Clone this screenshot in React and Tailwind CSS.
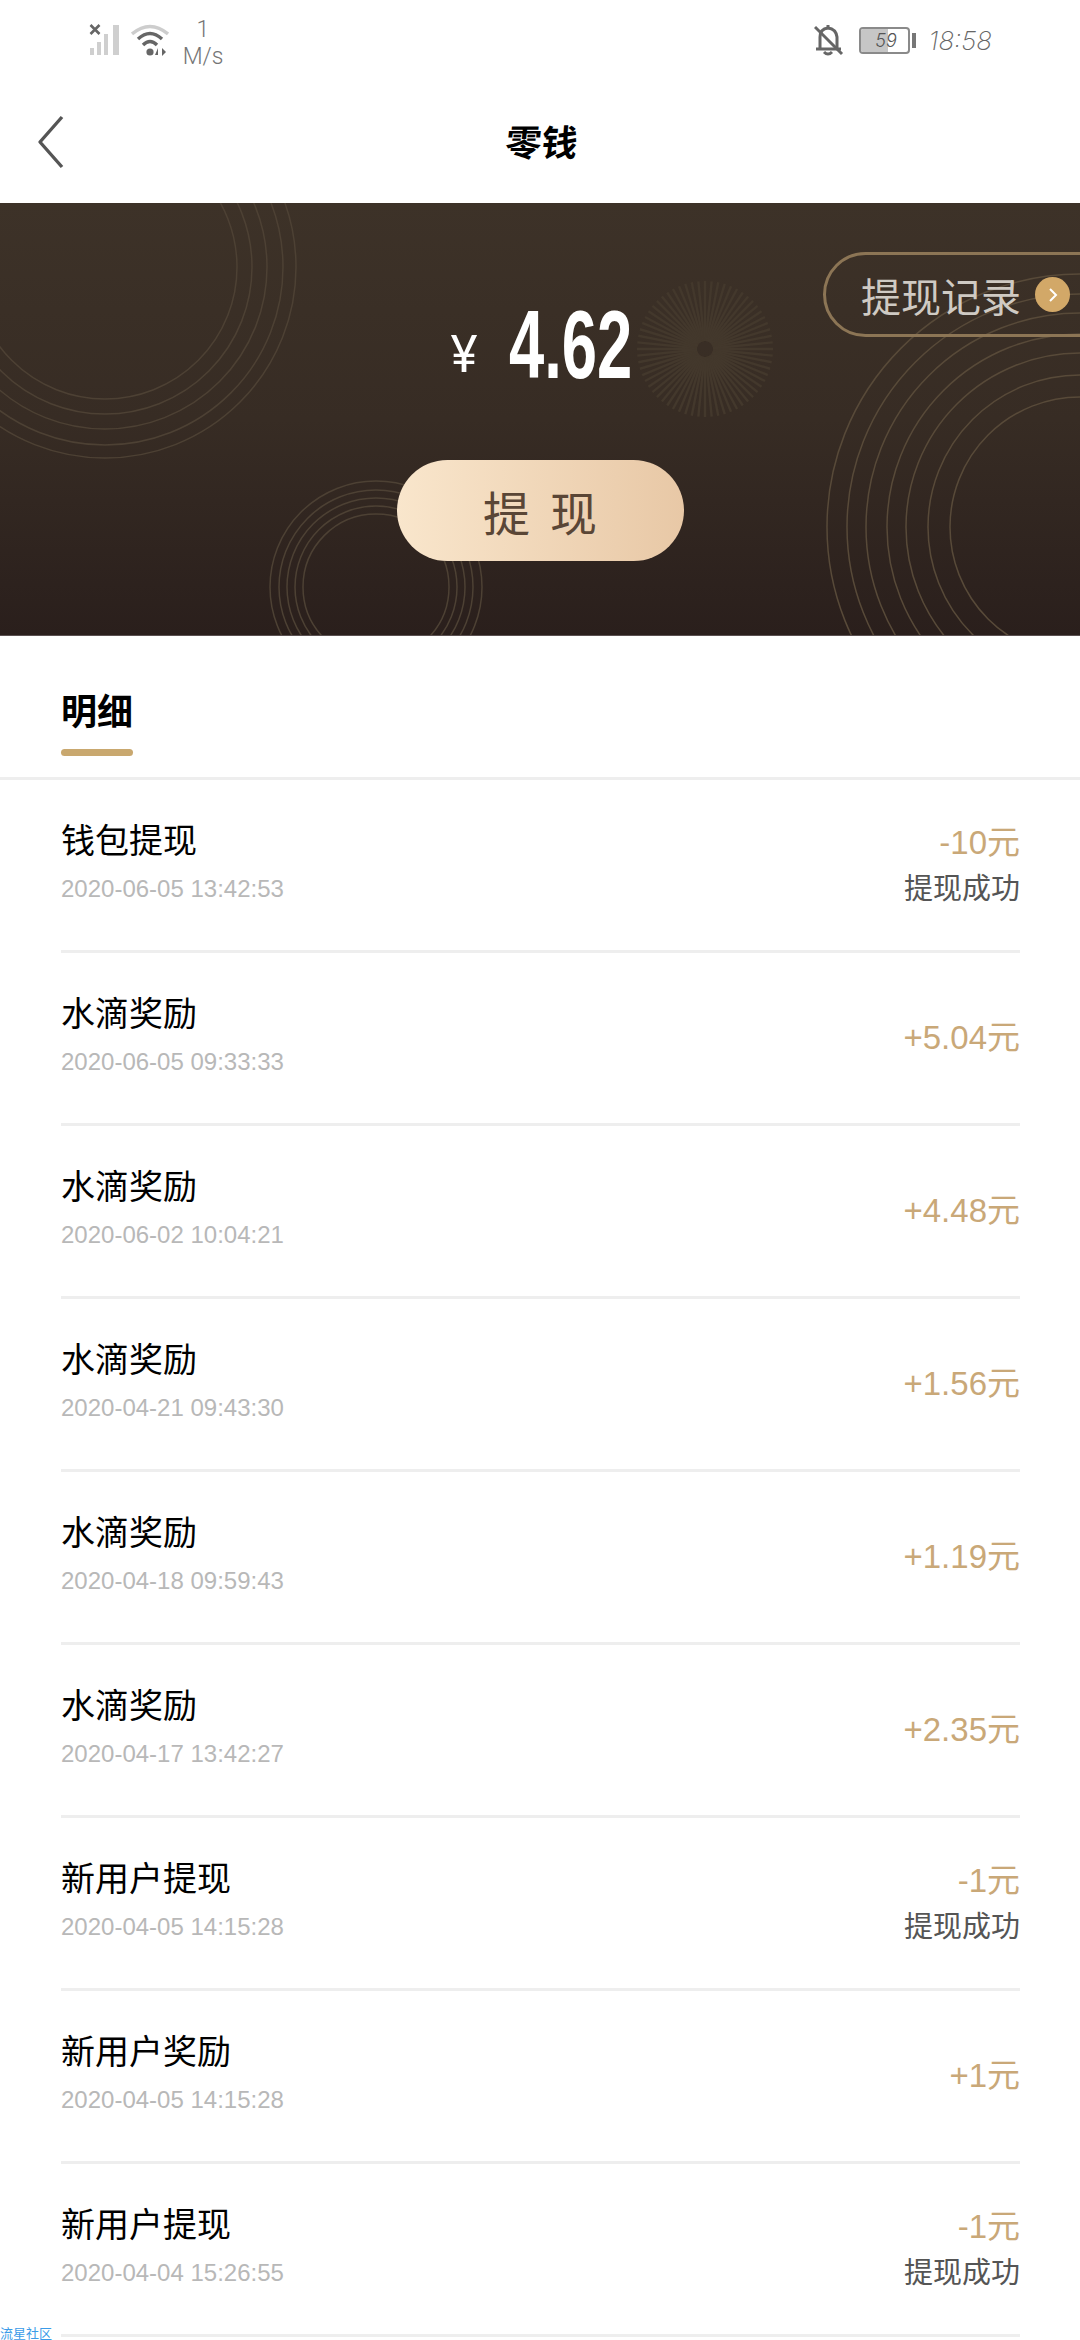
const rows = [
  { title: '钱包提现', date: '2020-06-05 13:42:53', amount: '-10元', sub: '提现成功' },
  { title: '水滴奖励', date: '2020-06-05 09:33:33', amount: '+5.04元' },
  { title: '水滴奖励', date: '2020-06-02 10:04:21', amount: '+4.48元' },
  { title: '水滴奖励', date: '2020-04-21 09:43:30', amount: '+1.56元' },
  { title: '水滴奖励', date: '2020-04-18 09:59:43', amount: '+1.19元' },
  { title: '水滴奖励', date: '2020-04-17 13:42:27', amount: '+2.35元' },
  { title: '新用户提现', date: '2020-04-05 14:15:28', amount: '-1元', sub: '提现成功' },
  { title: '新用户奖励', date: '2020-04-05 14:15:28', amount: '+1元' },
  { title: '新用户提现', date: '2020-04-04 15:26:55', amount: '-1元', sub: '提现成功' },
];

const FONT = 'font-["Liberation_Sans","Noto_Sans_CJK_SC",sans-serif]';

function Decor() {
  const spokes = Array.from({ length: 64 }, (_, i) => (i * Math.PI * 2) / 64);
  return (
    <svg className="absolute left-0 top-0" width="1080" height="433" viewBox="0 203 1080 433" fill="none">
      <g stroke="#4d4134" strokeWidth="1.5">
        {[191, 178, 162, 147, 132].map((r) => (
          <circle key={r} cx="105" cy="267" r={r} />
        ))}
        {[106, 97, 89, 81, 73].map((r) => (
          <circle key={r} cx="376" cy="587" r={r} />
        ))}
      </g>
      <g stroke="#584a39" strokeWidth="1.5">
        {[253, 233, 214, 193, 174, 152, 130].map((r) => (
          <circle key={r} cx="1080" cy="527" r={r} />
        ))}
      </g>
      <g stroke="#43382c" strokeWidth="2.4">
        {spokes.map((a, i) => (
          <line
            key={i}
            x1={705 + 8 * Math.cos(a)}
            y1={349 + 8 * Math.sin(a)}
            x2={705 + 68 * Math.cos(a)}
            y2={349 + 68 * Math.sin(a)}
          />
        ))}
      </g>
    </svg>
  );
}

function StatusBar() {
  return (
    <div className={`h-[68px] flex items-start justify-between pl-[89px] pr-[88px] pt-[20px] text-[#757575] ${FONT}`}>
      <div className="flex items-start">
        <svg width="34" height="36" viewBox="0 0 34 36" className="mt-[4px]" fill="none">
          <path d="M1.5 1 L10.5 10 M10.5 1 L1.5 10" stroke="#666" strokeWidth="2.6" />
          <rect x="1" y="24" width="4" height="7" fill="#cfcfcf" />
          <rect x="8" y="18" width="4" height="13" fill="#cfcfcf" />
          <rect x="15" y="10" width="4" height="21" fill="#cfcfcf" />
          <rect x="24" y="1" width="6" height="30" fill="#cfcfcf" />
        </svg>
        <svg width="38" height="34" viewBox="0 0 38 34" className="ml-[8px] mt-[4px]" fill="none">
          <path d="M1 10 Q19 -5 37 10" stroke="#cdcdcd" strokeWidth="3.4" />
          <path d="M7 15 Q19 4 31 15" stroke="#666" strokeWidth="3.4" />
          <path d="M12 21 Q19 14 26 21" stroke="#666" strokeWidth="3.4" />
          <circle cx="19" cy="28" r="3.6" fill="#666" />
          <path d="M27 31 V24 L24 31 Z M31 24 V32 L35 28 Z" fill="#666" />
        </svg>
        <div className="ml-[13px] w-[42px] text-center text-[23px] leading-[22px] -mt-[1px] font-light font-['Roboto']">
          <div>1</div>
          <div className="mt-[5px]">M/s</div>
        </div>
      </div>
      <div className="flex items-start">
        <svg width="30" height="32" viewBox="0 0 30 32" className="mt-[4px]" fill="none" stroke="#666" strokeWidth="3">
          <path d="M6 24 V13 Q6 5 14 4 Q22 5 23 13 V24 M2 25 H27" />
          <path d="M14 1 V4 M10 28 Q14 32 18 28" />
          <path d="M1 3 L28 30" />
        </svg>
        <div className="relative ml-[15px] mt-[7px] h-[27px] w-[51px] rounded-[4px] border-2 border-[#8a8a8a] overflow-hidden">
          <div className="h-full w-[27px] bg-[#c6c6c6]" />
          <div className="absolute inset-0 flex items-center justify-center pl-[4px] text-[18px] italic font-light text-[#555] font-['Inter']">59</div>
        </div>
        <div className="ml-[2px] mt-[13px] h-[15px] w-[4px] bg-[#777]" />
        <div className="ml-[13px] mt-[6px] text-[26px] leading-[30px] italic font-extralight text-[#666] font-['Inter']">18:58</div>
      </div>
    </div>
  );
}

function Header() {
  return (
    <div className="relative h-[135px] flex items-center justify-center">
      <svg width="30" height="54" viewBox="0 0 30 54" fill="none" className="absolute left-[36px] top-[47px]">
        <path d="M26 2 L4 27 L26 52" stroke="#555" strokeWidth="3.4" strokeLinejoin="round" />
      </svg>
      <span className="ml-[4px] mt-[9px] text-[36px] font-bold text-black -skew-x-6 font-['Noto_Sans_CJK_SC',serif]">零钱</span>
    </div>
  );
}

function Banner() {
  return (
    <div className="relative h-[433px] overflow-hidden bg-gradient-to-b from-[#3d3228] via-[#372c24] to-[#2a1f1c] border-b border-[#5a5050] flex flex-col items-center">
      <Decor />
      <div className="absolute right-[-40px] top-[49px] h-[85px] w-[297px] rounded-full border-[3px] border-[#8c7555] flex items-center pl-[35px]">
        <span className="text-[40px] leading-none text-[#cfcac3] font-['Noto_Sans_CJK_SC',sans-serif]">提现记录</span>
        <span className="ml-[14px] h-[35px] w-[35px] rounded-full bg-[#d2a868] flex items-center justify-center">
          <svg width="12" height="16" viewBox="0 0 12 16" fill="none">
            <path d="M3 2 L9 8 L3 14" stroke="#fff" strokeWidth="2" />
          </svg>
        </span>
      </div>
      <div className="relative mt-[92px] h-[100px] flex items-center text-white ml-[2px]">
        <span className="text-[50px] leading-none mr-[31px] mt-[18px] font-['Inter']">¥</span>
        <span className="inline-block w-[123px] origin-left scale-x-[0.66] text-[96px] leading-none font-bold whitespace-nowrap font-['Liberation_Sans',sans-serif]">4.62</span>
      </div>
      <div className="relative mt-[65px] h-[101px] w-[287px] rounded-full bg-gradient-to-r from-[#f9e6cc] to-[#e8c8a6] flex items-center justify-center gap-[20px] text-[47px] leading-none text-[#5a4636] font-['Noto_Sans_CJK_SC',sans-serif]">
        <span>提</span>
        <span>现</span>
      </div>
    </div>
  );
}

function Row({ title, date, amount, sub }) {
  return (
    <div className="h-[173px] border-b-[3px] border-[#eeeeee] flex justify-between">
      <div className="pt-[41px]">
        <div className="text-[34px] leading-[40px] text-black">{title}</div>
        <div className="mt-[14px] text-[24px] leading-[28px] text-[#b8b8b8]">{date}</div>
      </div>
      <div className="flex flex-col items-end justify-center">
        <div className="-mt-[1px] text-[33px] leading-[44px] text-[#c9a878]">{amount}</div>
        {sub && <div className="mt-[4px] text-[29px] leading-[40px] text-[#555555]">{sub}</div>}
      </div>
    </div>
  );
}

export default function App() {
  return (
    <div className={`relative h-[2340px] w-[1080px] overflow-hidden bg-white ${FONT}`}>
      <StatusBar />
      <Header />
      <Banner />
      <div className="h-[144px] border-b-[3px] border-[#eeeeee] pl-[61px] pt-[55px]">
        <div className="w-[72px]">
          <div className="text-[36px] leading-[44px] font-bold text-black">明细</div>
          <div className="mt-[14px] h-[7px] w-[72px] rounded-full bg-[#c9a86f]" />
        </div>
      </div>
      <div className="ml-[61px] mr-[60px]">
        {rows.map((r, i) => (
          <Row key={i} {...r} />
        ))}
      </div>
      <div className="absolute bottom-0 left-0 text-[13px] leading-[13px] text-[#3b9be8]">流星社区</div>
    </div>
  );
}
